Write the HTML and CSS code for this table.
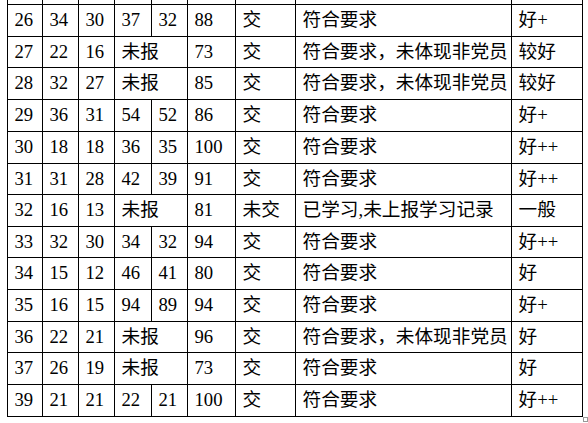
FILE: index.html
```html
<!DOCTYPE html>
<html>
<head>
<meta charset="utf-8">
<title>表格</title>
<link rel="stylesheet" href="styles.css">
</head>
<body>
<div class="page">
<table class="sheet">
<colgroup>
<col class="c1"><col class="c2"><col class="c3"><col class="c4"><col class="c5"><col class="c6"><col class="c7"><col class="c8"><col class="c9">
</colgroup>
<tbody>
<tr class="cut"><td></td><td></td><td></td><td><span class="frag">报</span></td><td></td><td></td><td></td><td></td><td></td></tr>
<tr><td>26</td><td>34</td><td>30</td><td>37</td><td>32</td><td>88</td><td>交</td><td>符合要求</td><td>好+</td></tr>
<tr class="s"><td>27</td><td>22</td><td>16</td><td colspan="2">未报</td><td>73</td><td>交</td><td>符合要求，未体现非党员</td><td>较好</td></tr>
<tr><td>28</td><td>32</td><td>27</td><td colspan="2">未报</td><td>85</td><td>交</td><td>符合要求，未体现非党员</td><td>较好</td></tr>
<tr><td>29</td><td>36</td><td>31</td><td>54</td><td>52</td><td>86</td><td>交</td><td>符合要求</td><td>好+</td></tr>
<tr><td>30</td><td>18</td><td>18</td><td>36</td><td>35</td><td>100</td><td>交</td><td>符合要求</td><td>好++</td></tr>
<tr class="s"><td>31</td><td>31</td><td>28</td><td>42</td><td>39</td><td>91</td><td>交</td><td>符合要求</td><td>好++</td></tr>
<tr><td>32</td><td>16</td><td>13</td><td colspan="2">未报</td><td>81</td><td>未交</td><td>已学习,未上报学习记录</td><td>一般</td></tr>
<tr class="s"><td>33</td><td>32</td><td>30</td><td>34</td><td>32</td><td>94</td><td>交</td><td>符合要求</td><td>好++</td></tr>
<tr><td>34</td><td>15</td><td>12</td><td>46</td><td>41</td><td>80</td><td>交</td><td>符合要求</td><td>好</td></tr>
<tr><td>35</td><td>16</td><td>15</td><td>94</td><td>89</td><td>94</td><td>交</td><td>符合要求</td><td>好+</td></tr>
<tr class="s"><td>36</td><td>22</td><td>21</td><td colspan="2">未报</td><td>96</td><td>交</td><td>符合要求，未体现非党员</td><td>好</td></tr>
<tr><td>37</td><td>26</td><td>19</td><td colspan="2">未报</td><td>73</td><td>交</td><td>符合要求</td><td>好</td></tr>
<tr><td>39</td><td>21</td><td>21</td><td>22</td><td>21</td><td>100</td><td>交</td><td>符合要求</td><td>好++</td></tr>
</tbody>
</table>
<div class="handle"></div>
</div>
</body>
</html>
```
FILE: styles.css
```css
html, body {
  margin: 0;
  padding: 0;
  background: #fff;
  overflow: hidden;
}
.page {
  width: 588px;
  height: 423px;
  overflow: hidden;
  padding-left: 6.5px;
  box-sizing: border-box;
}
.sheet {
  border-collapse: collapse;
  table-layout: fixed;
  width: 576px;
  margin-top: -28px;
  font-family: "Liberation Serif", "Times New Roman", "Noto Sans CJK SC", serif;
  font-size: 18.67px;
  font-weight: 400;
  color: #000;
}
.c1 { width: 35px; }
.c2 { width: 36px; }
.c3 { width: 36px; }
.c4 { width: 37px; }
.c5 { width: 36px; }
.c6 { width: 48px; }
.c7 { width: 60px; }
.c8 { width: 216px; }
.c9 { width: 71px; }
.sheet td {
  border: 1px solid #000;
  height: 32px;
  padding: 0 0 0 7px;
  box-sizing: border-box;
  vertical-align: middle;
  line-height: 20px;
  white-space: nowrap;
  overflow: hidden;
}
.sheet tr.s td {
  height: 31px;
}
.sheet tr.cut td {
  border-top: none;
  vertical-align: bottom;
}
.frag {
  display: inline-block;
  line-height: 18px;
  margin-bottom: 8px;
}
.handle {
  width: 5px;
  height: 5px;
  border: 1px solid #999;
  box-sizing: border-box;
  margin-left: 576px;
  margin-top: 0;
}
```
